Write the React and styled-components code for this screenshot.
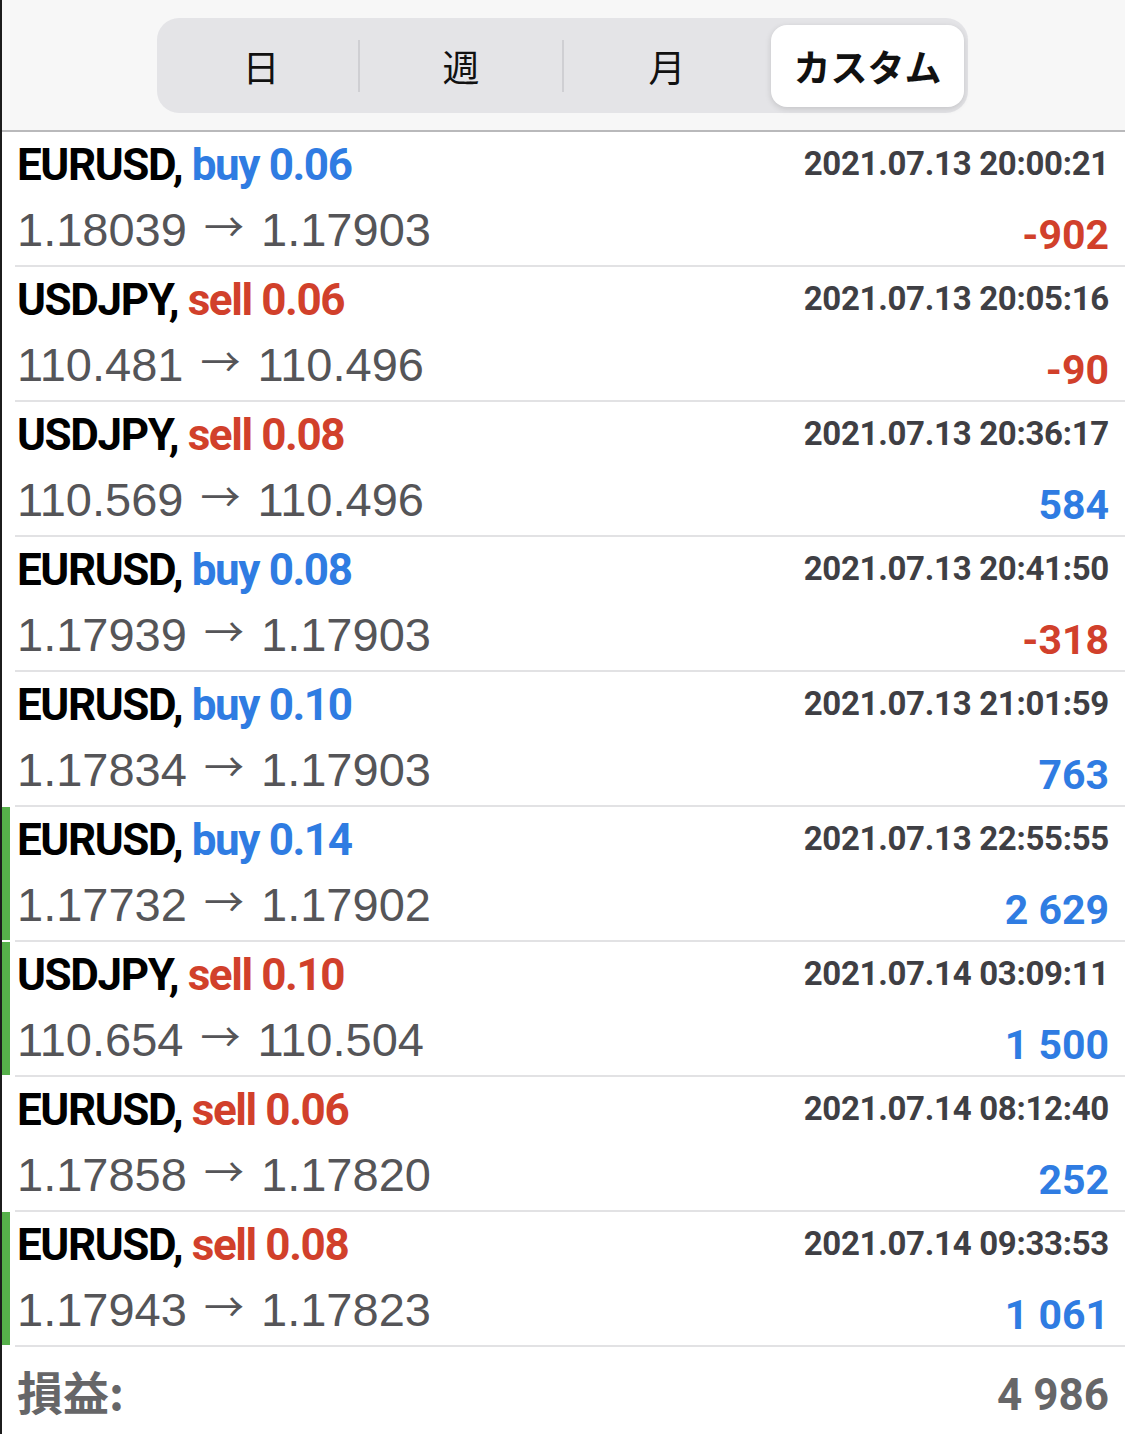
import React from 'react';
import styled, { createGlobalStyle } from 'styled-components';

const GlobalStyle = createGlobalStyle`
  html, body {
    margin: 0;
    padding: 0;
    background: #ffffff;
  }
  body {
    font-family: Roboto, "Liberation Sans", "Noto Sans CJK JP", sans-serif;
  }
`;

const trades = [
  { symbol: 'EURUSD', side: 'buy', lots: '0.06', open: '1.18039', close: '1.17903', time: '2021.07.13 20:00:21', profit: '-902', marked: false },
  { symbol: 'USDJPY', side: 'sell', lots: '0.06', open: '110.481', close: '110.496', time: '2021.07.13 20:05:16', profit: '-90', marked: false },
  { symbol: 'USDJPY', side: 'sell', lots: '0.08', open: '110.569', close: '110.496', time: '2021.07.13 20:36:17', profit: '584', marked: false },
  { symbol: 'EURUSD', side: 'buy', lots: '0.08', open: '1.17939', close: '1.17903', time: '2021.07.13 20:41:50', profit: '-318', marked: false },
  { symbol: 'EURUSD', side: 'buy', lots: '0.10', open: '1.17834', close: '1.17903', time: '2021.07.13 21:01:59', profit: '763', marked: false },
  { symbol: 'EURUSD', side: 'buy', lots: '0.14', open: '1.17732', close: '1.17902', time: '2021.07.13 22:55:55', profit: '2 629', marked: true },
  { symbol: 'USDJPY', side: 'sell', lots: '0.10', open: '110.654', close: '110.504', time: '2021.07.14 03:09:11', profit: '1 500', marked: true },
  { symbol: 'EURUSD', side: 'sell', lots: '0.06', open: '1.17858', close: '1.17820', time: '2021.07.14 08:12:40', profit: '252', marked: false },
  { symbol: 'EURUSD', side: 'sell', lots: '0.08', open: '1.17943', close: '1.17823', time: '2021.07.14 09:33:53', profit: '1 061', marked: true },
];

const periods = ['日', '週', '月', 'カスタム'];

const Page = styled.div`
  width: 1125px;
  min-height: 1434px;
  box-sizing: border-box;
  border-left: 2px solid #1c1c1c;
  background: #ffffff;
  overflow: hidden;
`;

const Header = styled.div`
  height: 132px;
  box-sizing: border-box;
  background: #f7f7f7;
  border-bottom: 2px solid #b9b9bb;
  padding-top: 18px;
  display: flex;
  justify-content: center;
  padding-right: 2px;
`;

const Segmented = styled.div`
  width: 811px;
  height: 95px;
  box-sizing: border-box;
  padding: 7px 4px 6px 6px;
  border-radius: 22px;
  background: #e4e4e7;
  display: grid;
  grid-template-columns: 196px 204px 208px 1fr;
  align-items: stretch;
`;

const Segment = styled.div`
  position: relative;
  display: flex;
  align-items: center;
  justify-content: center;
  border-radius: 16px;
  font-family: "Noto Sans CJK JP", sans-serif;
  font-size: 37px;
  font-weight: ${p => (p.$active ? 700 : 400)};
  color: #111;
  background: ${p => (p.$active ? '#ffffff' : 'transparent')};
  box-shadow: ${p => (p.$active ? '0 2px 6px rgba(0,0,0,0.14)' : 'none')};

  &::after {
    content: '';
    display: ${p => (p.$divider ? 'block' : 'none')};
    position: absolute;
    right: -1px;
    top: 15px;
    bottom: 15px;
    width: 2px;
    background: #cfcfd3;
  }
`;

const Row = styled.div`
  display: flex;
  align-items: stretch;
`;

const Marker = styled.div`
  width: 8px;
  flex: none;
  background: ${p => (p.$on ? '#56b04a' : 'transparent')};
  margin-bottom: 2px;
`;

const Body = styled.div`
  flex: 1;
  margin-left: 5px;
  display: flex;
  justify-content: space-between;
  padding: 7px 16px 10px 2px;
  border-bottom: 2px solid #e2e2e4;
  height: 116px;
`;

const Left = styled.div`
  display: flex;
  flex-direction: column;
`;

const Right = styled.div`
  display: flex;
  flex-direction: column;
  align-items: flex-end;
`;

const Title = styled.div`
  font-family: Roboto, "Liberation Sans", sans-serif;
  font-weight: 700;
  font-size: 44px;
  line-height: 52px;
  color: #000;
  white-space: nowrap;
  letter-spacing: -1.4px;
`;

const Side = styled.span`
  color: ${p => (p.$side === 'buy' ? '#2f7ce2' : '#d1402b')};
`;

const Prices = styled.div`
  margin-top: 12px;
  font-family: "Liberation Sans", Arial, sans-serif;
  font-size: 47px;
  line-height: 52px;
  color: #555558;
  white-space: nowrap;
`;

const Arrow = styled.span`
  font-family: "Noto Sans CJK JP", sans-serif;
  font-size: 40px;
  margin: 0 4px;
  position: relative;
  top: -4px;
`;

const Time = styled.div`
  font-family: Roboto, "Liberation Sans", sans-serif;
  font-weight: 700;
  font-size: 33px;
  line-height: 50px;
  color: #3f3f44;
  white-space: nowrap;
  letter-spacing: -0.3px;
`;

const Profit = styled.div`
  margin-top: 26px;
  font-family: Roboto, "Liberation Sans", sans-serif;
  font-weight: 700;
  font-size: 41px;
  line-height: 40px;
  color: ${p => (p.$loss ? '#d1402b' : '#2f7ce2')};
  white-space: nowrap;
`;

const Footer = styled.div`
  display: flex;
  justify-content: space-between;
  align-items: baseline;
  padding: 17px 16px 0 15px;
`;

const FooterLabel = styled.span`
  font-family: "Noto Sans CJK JP", sans-serif;
  font-weight: 700;
  font-size: 46px;
  line-height: 52px;
  color: #666668;
`;

const FooterValue = styled.span`
  font-family: Roboto, "Liberation Sans", sans-serif;
  font-weight: 700;
  font-size: 44px;
  line-height: 52px;
  color: #666668;
`;

function TradeRow({ trade }) {
  return (
    <Row>
      <Marker $on={trade.marked} />
      <Body>
        <Left>
          <Title>
            {trade.symbol}, <Side $side={trade.side}>{trade.side} {trade.lots}</Side>
          </Title>
          <Prices>
            {trade.open} <Arrow>→</Arrow> {trade.close}
          </Prices>
        </Left>
        <Right>
          <Time>{trade.time}</Time>
          <Profit $loss={trade.profit.startsWith('-')}>{trade.profit}</Profit>
        </Right>
      </Body>
    </Row>
  );
}

export default function App() {
  return (
    <Page>
      <GlobalStyle />
      <Header>
        <Segmented>
          {periods.map((p, i) => (
            <Segment key={p} $active={i === 3} $divider={i < 2}>
              {p}
            </Segment>
          ))}
        </Segmented>
      </Header>
      {trades.map((t, i) => (
        <TradeRow key={i} trade={t} />
      ))}
      <Footer>
        <FooterLabel>損益:</FooterLabel>
        <FooterValue>4 986</FooterValue>
      </Footer>
    </Page>
  );
}
